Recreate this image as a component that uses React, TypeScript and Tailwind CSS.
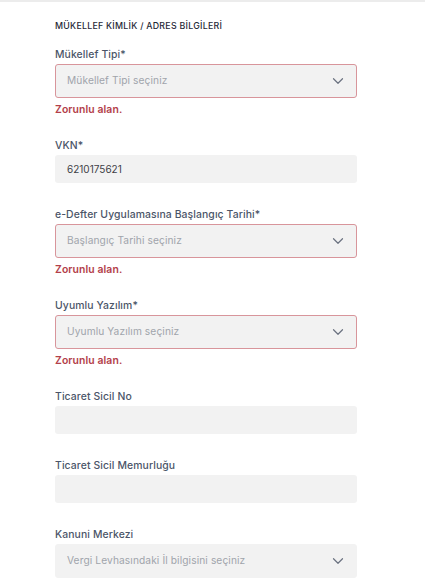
import { ChevronDown } from 'lucide-react';

type Field =
  | { kind: 'select'; label: string; placeholder: string; error?: boolean }
  | { kind: 'input'; label: string; value?: string };

const fields: Field[] = [
  { kind: 'select', label: 'Mükellef Tipi*', placeholder: 'Mükellef Tipi seçiniz', error: true },
  { kind: 'input', label: 'VKN*', value: '6210175621' },
  { kind: 'select', label: 'e-Defter Uygulamasına Başlangıç Tarihi*', placeholder: 'Başlangıç Tarihi seçiniz', error: true },
  { kind: 'select', label: 'Uyumlu Yazılım*', placeholder: 'Uyumlu Yazılım seçiniz', error: true },
  { kind: 'input', label: 'Ticaret Sicil No' },
  { kind: 'input', label: 'Ticaret Sicil Memurluğu' },
  { kind: 'select', label: 'Kanuni Merkezi', placeholder: 'Vergi Levhasındaki İl bilgisini seçiniz' },
];

function FormField({ field }: { field: Field }) {
  return (
    <div className="flex flex-col">
      <label className="mb-[2px] text-[10.4px] leading-[14px] font-medium text-[#4b5568] tracking-[0.01em]">
        {field.label}
      </label>
      {field.kind === 'select' ? (
        <>
          <div
            className={`flex h-[34px] items-center justify-between rounded-[3px] border bg-[#f2f2f2] pl-[11px] pr-[9px] ${
              field.error ? 'border-[#d8959b]' : 'border-[#f2f2f2]'
            }`}
          >
            <span className="text-[10.2px] text-[#a0a4ab] tracking-[0.01em]">{field.placeholder}</span>
            <ChevronDown className="h-[18px] w-[18px] text-[#6b7280]" strokeWidth={1.6} />
          </div>
          {field.error && (
            <div className="mt-[5px] -mb-[3px] text-[10.4px] leading-[14px] font-semibold text-[#b3404a] tracking-[0.01em]">
              Zorunlu alan.
            </div>
          )}
        </>
      ) : (
        <div className="flex h-[28px] items-center rounded-[3px] bg-[#f2f2f2] px-[12px]">
          <span className="text-[10px] text-[#3f3f46]">{field.value}</span>
        </div>
      )}
    </div>
  );
}

export default function App() {
  return (
    <div className="min-h-screen bg-white border-t-2 border-[#ececec]" style={{ fontFamily: 'Inter, "Noto Sans", sans-serif' }}>
      <div className="w-[302px] ml-[55px] pt-[18px]">
        <h3 className="text-[8.8px] leading-[12px] font-medium uppercase text-[#1f2937] tracking-[0.03em]">
          MÜKELLEF KİMLİK / ADRES BİLGİLERİ
        </h3>
        <div className="mt-[16px] flex flex-col gap-[25px]">
          {fields.map((f) => (
            <FormField key={f.label} field={f} />
          ))}
        </div>
      </div>
    </div>
  );
}
